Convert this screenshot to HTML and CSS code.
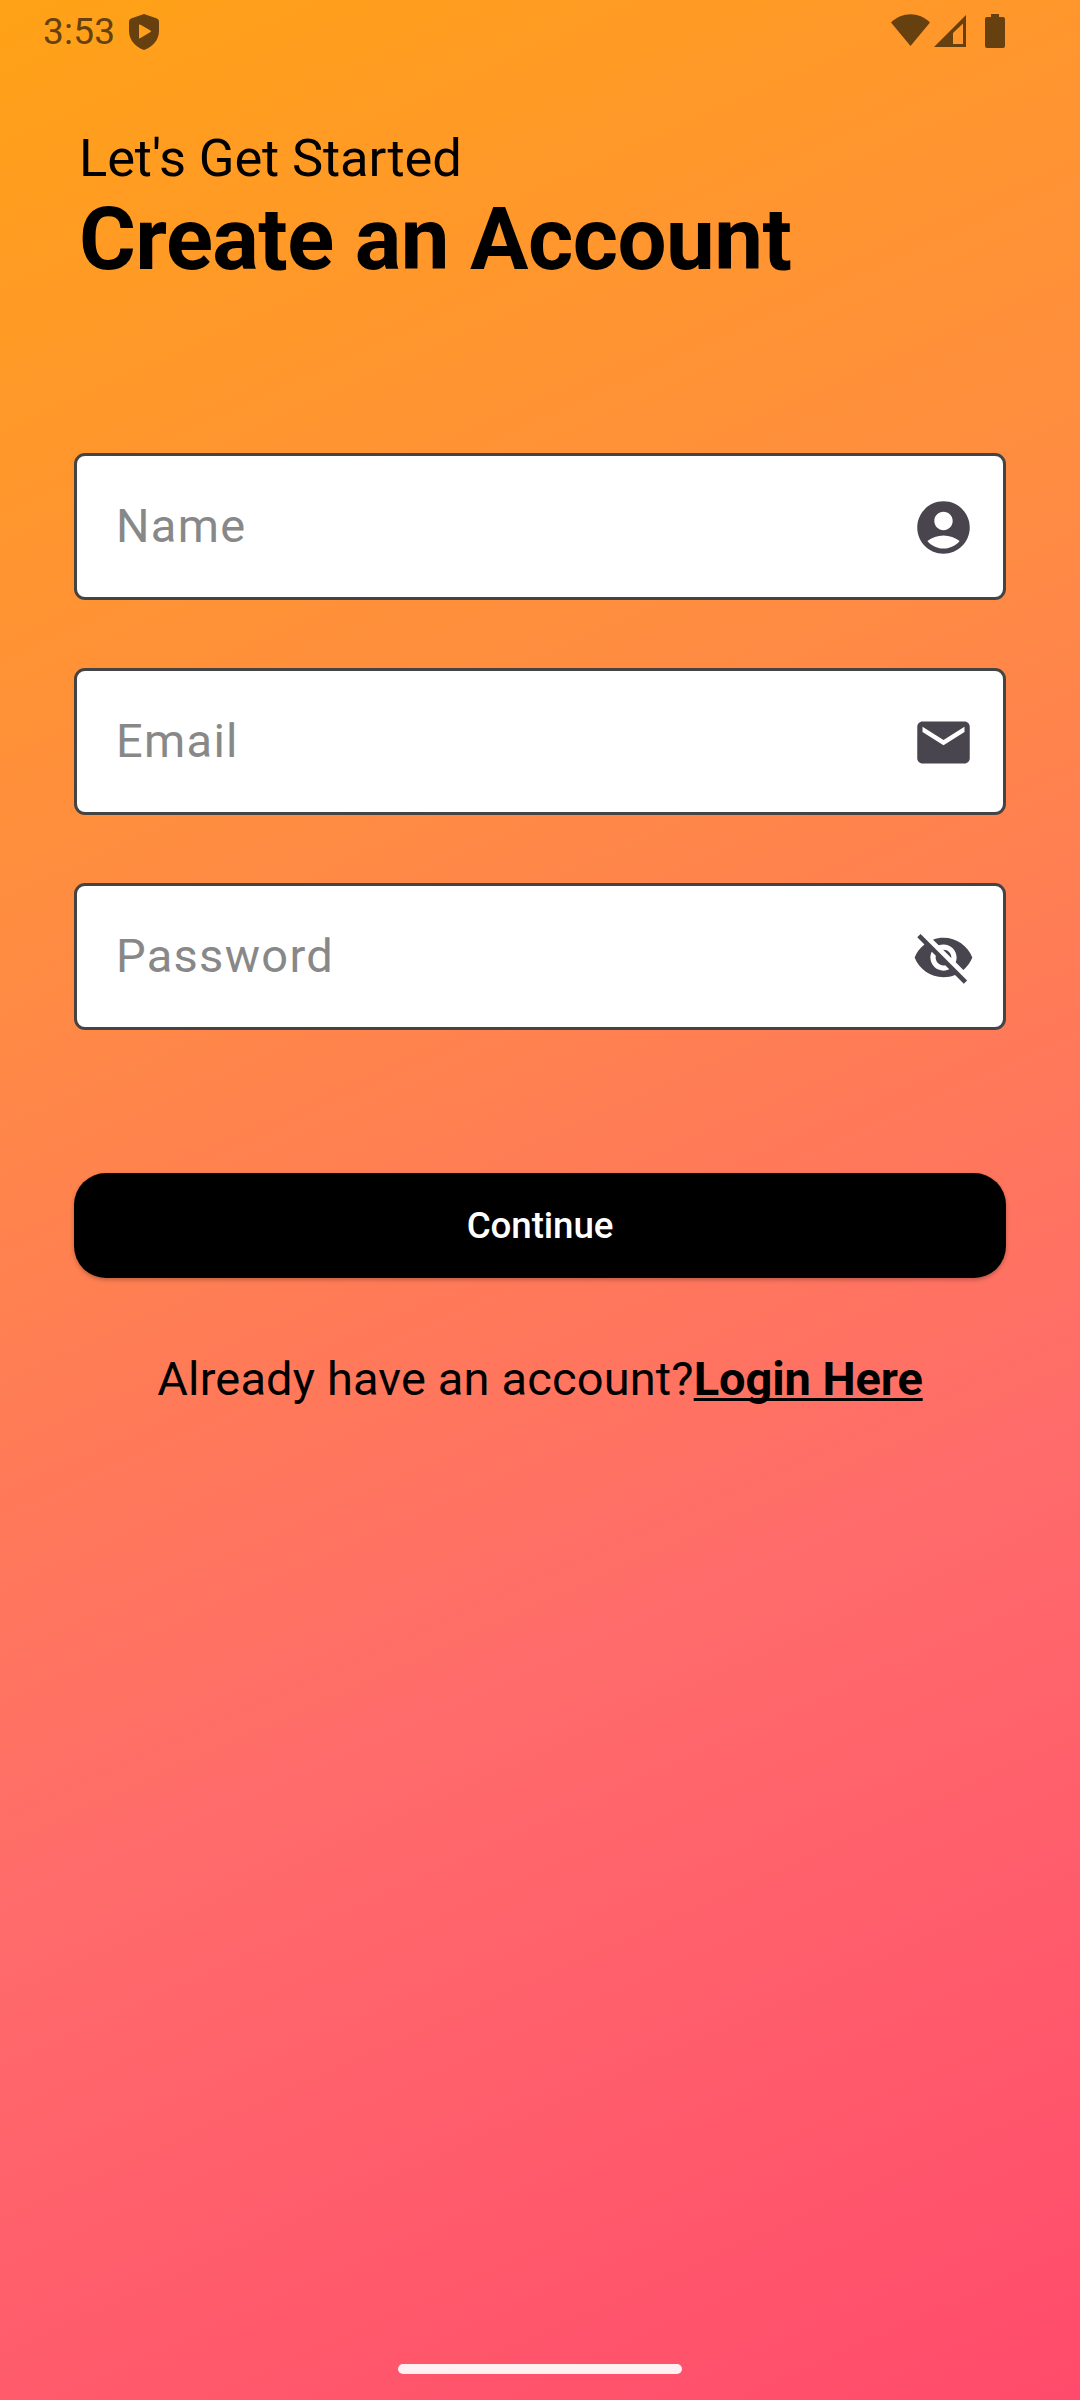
FILE: index.html
```html
<!DOCTYPE html>
<html lang="en">
<head>
<meta charset="utf-8">
<title>Create an Account</title>
<link rel="stylesheet" href="styles.css">
</head>
<body>
<div class="screen">
  <header class="status">
    <span class="clock">3:53</span>
    <svg class="shield" viewBox="0 0 30 36"><path fill-rule="evenodd" d="M15 0 28 4.500Q30 5.500 30 7.500V17C30 26 23.500 33 15 36 6.500 33 0 26 0 17V7.500Q0 5.500 2 4.500ZM10 11V23.500Q10 25 11.500 24L21.500 18Q22.500 17.300 21.500 16.600L11.500 10.700Q10 10 10 11Z"/></svg>
    <svg class="wifi" viewBox="0 0 39 32"><path d="M19.500 32 0 8.500C11-2.500 28-2.500 39 8.500Z"/></svg>
    <svg class="signal" viewBox="0 0 32 32"><path fill-rule="evenodd" d="M32 0V32H0ZM29 8.500 19 18V29H29Z"/></svg>
    <svg class="battery" viewBox="0 0 20 34"><path d="M6 0h8v3h4a2 2 0 0 1 2 2v27a2 2 0 0 1-2 2h-16a2 2 0 0 1-2-2v-27A2 2 0 0 1 2 3H6Z"/></svg>
  </header>
  <main class="content">
    <div class="intro">Let's Get Started</div>
    <h1 class="title">Create an Account</h1>
    <form class="form">
      <div class="field"><span>Name</span>
        <svg viewBox="0 0 24 24"><path d="M12 2C6.480 2 2 6.480 2 12s4.480 10 10 10 10-4.480 10-10S17.520 2 12 2zm0 4c1.930 0 3.500 1.570 3.500 3.500S13.930 13 12 13s-3.500-1.570-3.500-3.500S10.070 6 12 6zm0 14c-2.030 0-4.430-.82-6.140-2.880C7.550 15.800 9.680 15 12 15s4.450.8 6.140 2.120C16.430 19.180 14.030 20 12 20z"/></svg></div>
      <div class="field"><span>Email</span>
        <svg viewBox="0 0 24 24"><path d="M20 4H4c-1.100 0-1.990.9-1.990 2L2 18c0 1.100.9 2 2 2h16c1.100 0 2-.9 2-2V6c0-1.100-.9-2-2-2zm0 4l-8 5-8-5V6l8 5 8-5v2z"/></svg></div>
      <div class="field"><span>Password</span>
        <svg viewBox="0 0 24 24"><path d="M12 7c2.760 0 5 2.240 5 5 0 .65-.13 1.260-.36 1.830l2.920 2.920c1.510-1.260 2.700-2.890 3.430-4.750-1.730-4.390-6-7.500-11-7.500-1.400 0-2.740.25-3.980.7l2.160 2.160C10.740 7.130 11.350 7 12 7zM2 4.270l2.280 2.280.46.46C3.080 8.300 1.780 10.020 1 12c1.730 4.390 6 7.500 11 7.500 1.550 0 3.030-.3 4.380-.84l.42.42L19.730 22 21 20.730 3.270 3 2 4.270zM7.530 9.800l1.550 1.550c-.05.21-.08.43-.08.65 0 1.660 1.340 3 3 3 .22 0 .44-.03.65-.08l1.550 1.550c-.67.33-1.410.53-2.200.53-2.760 0-5-2.240-5-5 0-.79.2-1.530.53-2.200zm4.310-.78l3.150 3.150.02-.16c0-1.660-1.340-3-3-3l-.17.01z"/></svg></div>
      <button class="continue" type="button">Continue</button>
    </form>
    <p class="login">Already have an account?<a class="link">Login Here</a></p>
  </main>
  <div class="home"></div>
</div>
</body>
</html>
```

FILE: styles.css
```css
* { box-sizing: border-box; }
body { margin: 0; font-family: Roboto, sans-serif; color: #000; }
.screen { height: 2400px; display: flex; flex-direction: column; overflow: hidden; background: linear-gradient(155.800deg, #ffa216 0%, #ff8c42 33.330%, #ff6b6b 66.670%, #ff4b6b 100%); }
.status { height: 62px; padding: 0 75px 0 43px; display: flex; align-items: center; color: #67400f; fill: currentColor; flex: none; }
.clock { font-size: 37px; letter-spacing: .2px; }
.shield { width: 30px; height: 36px; margin-left: 14px; margin-top: 1px; }
.wifi { width: 39px; height: 32px; margin: 0 0 2px auto; }
.signal { width: 32px; height: 32px; margin: 0 0 1px 4px; }
.battery { width: 20px; height: 34px; margin-left: 19px; }
.content { padding: 63px 74px 0; }
.intro { font-size: 52.500px; line-height: 66px; padding-left: 5px; letter-spacing: -.13px; }
.title { margin: 0; padding-left: 5px; font-size: 87px; line-height: 96px; font-weight: 700; letter-spacing: -.55px; }
.form { margin-top: 166px; display: flex; flex-direction: column; gap: 68px; }
.field { height: 147px; padding: 0 28px 0 39px; border: 3px solid #444; border-radius: 11px; background: #fff; display: flex; align-items: center; justify-content: space-between; font-size: 47px; letter-spacing: 1.300px; color: #888; }
.field span { padding-bottom: 2px; }
.field svg { width: 63px; height: 63px; fill: #49454f; margin-top: 2px; }
.continue { height: 105px; margin-top: 75px; border: 0; border-radius: 32px; background: #000; color: #fff; font: 500 36.750px Roboto, sans-serif; letter-spacing: -.1px; box-shadow: 0 2px 4px rgba(0,0,0,.25); }
.login { margin: 69px 0 0; text-align: center; font-size: 47px; line-height: 64px; letter-spacing: .15px; }
.link { font-weight: 700; text-decoration: underline; text-decoration-thickness: 3px; text-underline-offset: 3px; text-decoration-skip-ink: none; letter-spacing: -.1px; }
.home { width: 284px; height: 10px; border-radius: 5px; background: #fff1f2; margin: auto auto 26px; }
```
